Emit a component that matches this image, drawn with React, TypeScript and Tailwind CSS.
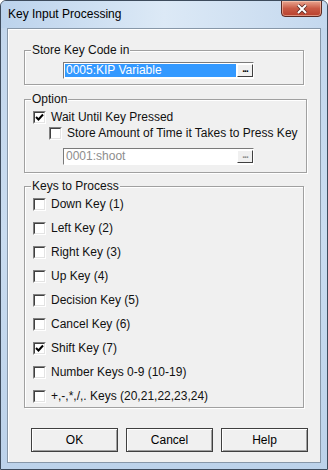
import React from "react";

const font = { fontFamily: '"Liberation Sans", Arial, sans-serif' };

function CheckBox({ checked }: { checked?: boolean }) {
  return (
    <span className="w-[13px] h-[13px] shrink-0 border-t border-l border-[#808080] border-b border-r border-b-white border-r-white bg-white flex">
      <span className="flex-1 border-t border-l border-[#404040] border-b border-r border-b-[#e3e3e3] border-r-[#e3e3e3] bg-white flex items-center justify-center">
        {checked && (
          <svg width="9" height="9" viewBox="0 0 9 9">
            <path d="M1 4 L3.5 6.5 L8 1.5" fill="none" stroke="#000" strokeWidth="2" />
          </svg>
        )}
      </span>
    </span>
  );
}

function CheckRow({ label, checked }: { label: string; checked?: boolean }) {
  return (
    <div className="flex items-center h-[14px] gap-[5px]">
      <CheckBox checked={checked} />
      <span className="text-[12px] leading-[14px] text-[#111] whitespace-nowrap">{label}</span>
    </div>
  );
}

function PickField({ value, selected, disabled }: { value: string; selected?: boolean; disabled?: boolean }) {
  return (
    <div className="ml-[30px] w-[191px] h-[17px] flex border-t border-l border-[#7a7a7a] border-b border-r border-b-white border-r-white">
      <div className="flex-1 flex bg-white p-[1px] pr-0">
        <div
          className={
            selected
              ? "flex-1 bg-[#3399ff] text-white text-[12px] leading-[13px] px-[1px]"
              : "flex-1 text-[#8d8d8d] text-[12px] leading-[13px] px-[1px]"
          }
        >
          {value}
        </div>
        <div className="w-[16px] ml-[1px] bg-[#f0f0f0] flex items-center justify-center border-t border-l border-white border-b border-r border-b-[#404040] border-r-[#404040]">
          <span className={disabled ? "text-[#8d8d8d] text-[10px] leading-[6px] font-bold tracking-[-1px] -mt-[3px]" : "text-black text-[10px] leading-[6px] font-bold tracking-[-1px] -mt-[3px]"}>
            ...
          </span>
        </div>
      </div>
    </div>
  );
}

function Group({ title, className, children }: { title: string; className?: string; children: React.ReactNode }) {
  return (
    <fieldset className={"border border-[#a0a0a0] shadow-[1px_1px_0_#ffffff,inset_1px_1px_0_#ffffff] mx-[16px] px-[8px] " + (className ?? "")}>
      <legend className="-ml-[2px] px-[1px] text-[12px] leading-[14px] bg-[#f0f0f0] text-[#111]">{title}</legend>
      {children}
    </fieldset>
  );
}

function Btn({ label }: { label: string }) {
  return (
    <button className="w-[87px] h-[24px] bg-[#f0f0f0] border border-[#404040] shadow-[inset_1px_1px_0_#ffffff,inset_-1px_-1px_0_#a0a0a0] text-[12px] text-black">
      {label}
    </button>
  );
}

export default function App() {
  const keys = [
    ["Down Key (1)", false],
    ["Left Key (2)", false],
    ["Right Key (3)", false],
    ["Up Key (4)", false],
    ["Decision Key (5)", false],
    ["Cancel Key (6)", false],
    ["Shift Key (7)", true],
    ["Number Keys 0-9 (10-19)", false],
    ["+,-,*,/,. Keys (20,21,22,23,24)", false],
  ] as const;

  return (
    <div style={font} className="w-[328px] h-[470px] flex flex-col border border-[#3d4b5c] rounded-t-[6px] bg-gradient-to-b from-[#c2d6ec] via-[#c9dcf0] to-[#bcd2ea] overflow-hidden">
      {/* title bar */}
      <div className="h-[27px] flex items-start justify-between pl-[7px] pr-[5px] bg-gradient-to-r from-[#bcd3ec] via-[#dce9f6] to-[#c4d8ee]">
        <span className="mt-[6px] text-[12px] leading-[14px] text-black">Key Input Processing</span>
        <div className="w-[41px] h-[17px] -mt-[1px] rounded-b-[4px] border border-[#5a2a24] bg-gradient-to-b from-[#e8a590] via-[#c95a45] to-[#b8402d] flex items-center justify-center shadow-[inset_0_0_0_1px_rgba(255,220,200,0.5)]">
          <svg width="12" height="10" viewBox="0 0 12 10">
            <path d="M2 1 L10 9 M10 1 L2 9" stroke="#5a2a24" strokeWidth="3.6" />
            <path d="M2 1 L10 9 M10 1 L2 9" stroke="#ffffff" strokeWidth="2" />
          </svg>
        </div>
      </div>

      {/* client area */}
      <div className="flex-1 mx-[6px] mb-[6px] border border-[#8797a8] bg-[#f0f0f0] pt-[14px] flex flex-col shadow-[inset_1px_1px_0_#ffffff]">
        <Group title="Store Key Code in" className="pt-[5px] pb-[5px]">
          <PickField value="0005:KIP Variable" selected />
        </Group>

        <Group title="Option" className="mt-[7px] pt-[4px] pb-[7px]">
          <CheckRow label="Wait Until Key Pressed" checked />
          <div className="mt-[2px] ml-[16px]">
            <CheckRow label="Store Amount of Time it Takes to Press Key" />
          </div>
          <div className="mt-[8px]">
            <PickField value="0001:shoot" disabled />
          </div>
        </Group>

        <Group title="Keys to Process" className="mt-[6px] pt-[4px] pb-[4px]">
          <div className="flex flex-col gap-[10px]">
            {keys.map(([label, checked]) => (
              <CheckRow key={label} label={label} checked={checked} />
            ))}
          </div>
        </Group>

        <div className="mt-[20px] flex gap-[8px] pl-[23px]">
          <Btn label="OK" />
          <Btn label="Cancel" />
          <Btn label="Help" />
        </div>
      </div>
    </div>
  );
}
